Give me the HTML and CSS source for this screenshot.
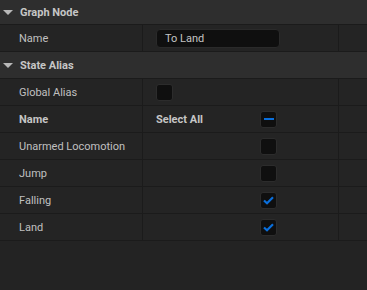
FILE: index.html
```html
<!DOCTYPE html>
<html lang="en">
<head>
    <meta charset="UTF-8">
    <title>Details</title>
    <link rel="stylesheet" href="styles.css">
</head>
<body>

<div class="details">
    <div class="section-head first">
        <span class="arrow"></span>
        <span>Graph Node</span>
    </div>
    <div class="row">
        <div class="cell name">Name</div>
        <div class="cell value">
            <div class="textbox">To Land</div>
        </div>
        <div class="cell extra"></div>
    </div>

    <div class="section-head">
        <span class="arrow"></span>
        <span>State Alias</span>
    </div>
    <div class="row">
        <div class="cell name">Global Alias</div>
        <div class="cell value"><span class="check"></span></div>
        <div class="cell extra"></div>
    </div>
    <div class="row">
        <div class="cell name bold">Name</div>
        <div class="cell value">
            <span class="spacer bold">Select All</span>
            <span class="check mixed"><span class="dash"></span></span>
        </div>
        <div class="cell extra"></div>
    </div>
    <div class="row">
        <div class="cell name">Unarmed Locomotion</div>
        <div class="cell value"><span class="spacer"></span><span class="check"></span></div>
        <div class="cell extra"></div>
    </div>
    <div class="row">
        <div class="cell name">Jump</div>
        <div class="cell value"><span class="spacer"></span><span class="check"></span></div>
        <div class="cell extra"></div>
    </div>
    <div class="row">
        <div class="cell name">Falling</div>
        <div class="cell value">
            <span class="spacer"></span>
            <span class="check">
                <svg width="11" height="9" viewBox="0 0 11 9"><path d="M1 4.5 L4 7.2 L10 1.2" fill="none" stroke="#0a6fdc" stroke-width="2.2"/></svg>
            </span>
        </div>
        <div class="cell extra"></div>
    </div>
    <div class="row">
        <div class="cell name">Land</div>
        <div class="cell value">
            <span class="spacer"></span>
            <span class="check">
                <svg width="11" height="9" viewBox="0 0 11 9"><path d="M1 4.5 L4 7.2 L10 1.2" fill="none" stroke="#0a6fdc" stroke-width="2.2"/></svg>
            </span>
        </div>
        <div class="cell extra"></div>
    </div>
</div>

</body>
</html>
```

FILE: styles.css
```css
body {
    margin: 0;
    background: #232323;
    font-family: Roboto, "Liberation Sans", sans-serif;
    font-size: 11px;
    color: #c0c0c0;
    height: 290px;
    overflow: hidden;
}

.details {
    width: 367px;
}

.section-head {
    display: flex;
    align-items: center;
    height: 26px;
    padding-left: 3px;
    background: #2e2e2e;
    border-bottom: 1px solid #1b1b1b;
    font-weight: bold;
    color: #c6c6c6;
}

.section-head.first {
    height: 24px;
}

.arrow {
    width: 0;
    height: 0;
    border-left: 5px solid transparent;
    border-right: 5px solid transparent;
    border-top: 5px solid #b8b8b8;
    margin-right: 7px;
}

.row {
    display: grid;
    grid-template-columns: 143px 196px 1fr;
    height: 26px;
    background: #242424;
    border-bottom: 1px solid #1b1b1b;
}

.cell {
    display: flex;
    align-items: center;
    border-right: 1px solid #1b1b1b;
}

.cell.extra {
    border-right: none;
}

.name {
    padding-left: 19px;
}

.value {
    padding-left: 13px;
}

.bold {
    font-weight: bold;
    color: #c6c6c6;
}

.textbox {
    box-sizing: border-box;
    width: 124px;
    height: 19px;
    padding-left: 8px;
    line-height: 17px;
    background: #0f0f0f;
    border: 1px solid #2a2a2a;
    border-radius: 4px;
    color: #c4c4c4;
}

.spacer {
    width: 104px;
}

.check {
    box-sizing: border-box;
    display: flex;
    align-items: center;
    justify-content: center;
    width: 17px;
    height: 17px;
    background: #0f0f0f;
    border: 1px solid #2c2c2c;
    border-radius: 3px;
}

.dash {
    width: 10px;
    height: 2px;
    background: #0a6fdc;
}
```
